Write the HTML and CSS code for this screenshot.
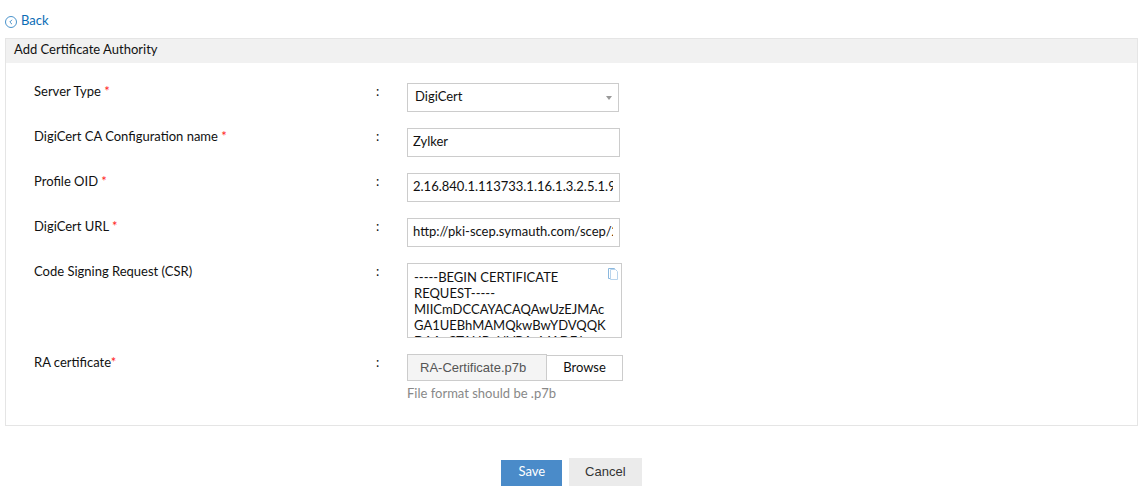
FILE: index.html
```html
<!DOCTYPE html>
<html lang="en">
<head>
    <meta charset="UTF-8">
    <meta name="viewport" content="width=device-width, initial-scale=1.0">
    <title>Add Certificate Authority</title>
    <link rel="stylesheet" href="styles.css">
</head>
<body>

<a class="back" href="#">
    <svg width="12" height="12" viewBox="0 0 12 12" fill="none" stroke="#4a93cb" aria-hidden="true">
        <circle cx="6" cy="6" r="5.5"/>
        <path d="M7 3.8 L4.8 6 L7 8.2"/>
    </svg>
    Back
</a>

<form>
    <div class="panel">
        <h2>Add Certificate Authority</h2>

        <div class="fields">
            <div class="row">
                <label for="server-type">Server Type <span class="required">*</span></label>
                <span class="colon">:</span>
                <div class="select-box">
                    <select id="server-type">
                        <option>DigiCert</option>
                    </select>
                    <svg class="arrow" width="6" height="4" viewBox="0 0 6 4" aria-hidden="true"><path d="M0 0h6L3 4z" fill="#999"/></svg>
                </div>
            </div>

            <div class="row">
                <label for="config-name">DigiCert CA Configuration name <span class="required">*</span></label>
                <span class="colon">:</span>
                <input type="text" id="config-name" value="Zylker">
            </div>

            <div class="row">
                <label for="profile-oid">Profile OID <span class="required">*</span></label>
                <span class="colon">:</span>
                <input type="text" id="profile-oid" value="2.16.840.1.113733.1.16.1.3.2.5.1.9">
            </div>

            <div class="row">
                <label for="digicert-url">DigiCert URL <span class="required">*</span></label>
                <span class="colon">:</span>
                <input type="text" id="digicert-url" value="http://pki-scep.symauth.com/scep/2.16.840">
            </div>

            <div class="row">
                <label for="csr">Code Signing Request (CSR)</label>
                <span class="colon">:</span>
                <div class="csr-box">
                    <textarea id="csr" readonly>-----BEGIN CERTIFICATE
REQUEST-----
MIICmDCCAYACAQAwUzEJMAc
GA1UEBhMAMQkwBwYDVQQK
DAAxCTAHBgNVBAgMADEJ</textarea>
                    <button type="button" class="copy" aria-label="Copy">
                        <svg width="10" height="12" viewBox="0 0 10 12" fill="none" stroke="#9cc3e4" aria-hidden="true">
                            <path d="M2.5 10.5h-2v-10h6v1" stroke="#8bb8de"/>
                            <path d="M2.5 1.5h5l2 2v8h-7z" fill="#fff" stroke="#b9d4ec"/>
                        </svg>
                    </button>
                </div>
            </div>

            <div class="row">
                <label for="ra-file">RA certificate<span class="required">*</span></label>
                <span class="colon">:</span>
                <div>
                    <div class="file">
                        <input type="text" id="ra-file" class="file-name" value="RA-Certificate.p7b" readonly>
                        <button type="button" class="browse">Browse</button>
                    </div>
                    <p class="hint">File format should be .p7b</p>
                </div>
            </div>
        </div>
    </div>

    <div class="actions">
        <button type="submit" class="save">Save</button>
        <button type="button" class="cancel">Cancel</button>
    </div>
</form>

</body>
</html>
```

FILE: styles.css
```css
* {
    box-sizing: border-box;
    margin: 0;
    padding: 0;
}
body {
    padding: 12px 4px 0 5px;
    background: #fff;
    color: #111;
    font-family: Lato, sans-serif;
    font-size: 13px;
    line-height: 16px;
}
input, select, textarea, button {
    font: inherit;
    color: #111;
}
button {
    border: none;
    cursor: pointer;
}
.back {
    display: inline-flex;
    align-items: flex-end;
    gap: 4px;
    margin-bottom: 10px;
    color: #0b6cb5;
    text-decoration: none;
}
.panel {
    border: 1px solid #e5e5e5;
}
h2 {
    padding: 2px 8px 6px;
    background: #f1f1f1;
    font-size: 13px;
    font-weight: normal;
}
.fields {
    display: flex;
    flex-direction: column;
    gap: 16px;
    padding: 20px 28px 24px;
}
.row {
    display: grid;
    grid-template-columns: 342px 31px auto;
    align-items: start;
    justify-content: start;
}
.required {
    color: #f22;
}
.row input, .row select, textarea {
    display: block;
    width: 213px;
    height: 29px;
    padding: 0 6px 4px 5px;
    border: 1px solid #ccc;
    border-radius: 0;
    background: #fff;
}
.select-box, .csr-box {
    position: relative;
    width: max-content;
}
.row select {
    width: 212px;
    padding: 0 7px 4px;
    appearance: none;
}
.arrow {
    position: absolute;
    top: 13px;
    right: 7px;
}
.row textarea {
    width: 215px;
    height: 75px;
    padding: 5px 6px;
    overflow: hidden;
    resize: none;
}
.copy {
    position: absolute;
    top: 5px;
    right: 4px;
    display: flex;
    background: none;
}
.file {
    display: flex;
    align-items: flex-end;
}
.row .file-name {
    width: 140px;
    height: 27px;
    padding: 0 12px;
    background: #f4f4f4;
    color: #555;
    font-family: "Liberation Sans", Arial, sans-serif;
}
.browse {
    width: 76px;
    height: 26px;
    padding-bottom: 2px;
    border: 1px solid #ccc;
    border-left: none;
    background: #fff;
}
.hint {
    margin-top: 4px;
    color: #888;
}
.actions {
    display: flex;
    justify-content: center;
    align-items: flex-end;
    gap: 7px;
    margin-top: 32px;
}
.save {
    height: 26px;
    padding: 0 17px 4px;
    background: #4a8bc9;
    color: #fff;
}
.cancel {
    height: 28px;
    padding: 0 16px;
    background: #ebebeb;
    color: #333;
    font-family: "Liberation Sans", Arial, sans-serif;
}
```
